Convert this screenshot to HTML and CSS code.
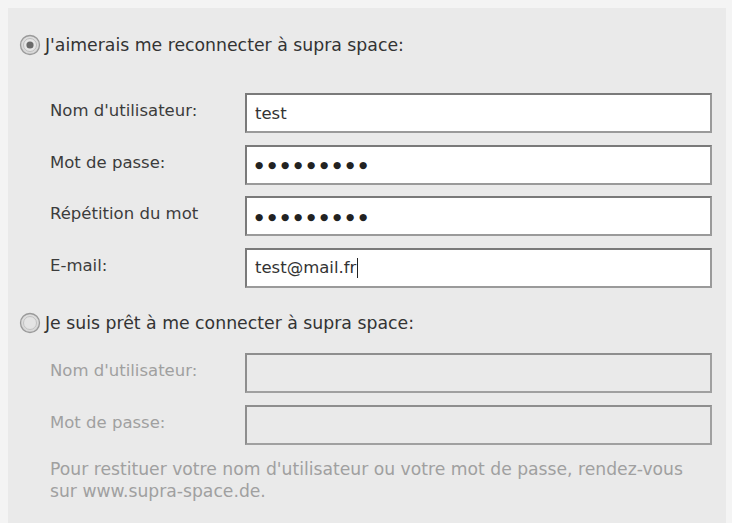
FILE: index.html
```html
<!DOCTYPE html>
<html lang="fr">
<head>
<meta charset="utf-8">
<link rel="stylesheet" href="styles.css">
</head>
<body>
<div class="panel">
  <div class="radio-row">
    <svg class="radio" width="22" height="22" viewBox="0 0 22 22">
      <defs>
        <radialGradient id="rg1" cx="50%" cy="45%" r="55%">
          <stop offset="0" stop-color="#f4f4f4"/>
          <stop offset="1" stop-color="#d2d2d2"/>
        </radialGradient>
      </defs>
      <circle cx="11" cy="11" r="9.5" fill="url(#rg1)" stroke="#9a9a9a" stroke-width="1.3"/>
      <circle cx="11" cy="11" r="6.5" fill="#e6e6e6" stroke="#bdbdbd" stroke-width="1"/>
      <circle cx="11" cy="11" r="3.6" fill="#6a6a6a"/>
    </svg>
    <span class="radio-label">J'aimerais me reconnecter à supra space:</span>
  </div>
  <div class="form form-active">
    <label class="lbl">Nom d'utilisateur:</label>
    <div class="field">test</div>
    <label class="lbl">Mot de passe:</label>
    <div class="field dots">●●●●●●●●●</div>
    <label class="lbl">Répétition du mot</label>
    <div class="field dots">●●●●●●●●●</div>
    <label class="lbl">E-mail:</label>
    <div class="field">test@mail.fr<span class="caret"></span></div>
  </div>
  <div class="radio-row radio-row-2">
    <svg class="radio" width="22" height="22" viewBox="0 0 22 22">
      <defs>
        <radialGradient id="rg2" cx="50%" cy="45%" r="55%">
          <stop offset="0" stop-color="#f4f4f4"/>
          <stop offset="1" stop-color="#d2d2d2"/>
        </radialGradient>
      </defs>
      <circle cx="11" cy="11" r="9.5" fill="url(#rg2)" stroke="#9a9a9a" stroke-width="1.3"/>
      <circle cx="11" cy="11" r="6.5" fill="#e4e4e4" stroke="#c2c2c2" stroke-width="1"/>
    </svg>
    <span class="radio-label">Je suis prêt à me connecter à supra space:</span>
  </div>
  <div class="form form-disabled">
    <label class="lbl">Nom d'utilisateur:</label>
    <div class="field"></div>
    <label class="lbl">Mot de passe:</label>
    <div class="field"></div>
  </div>
  <p class="help">Pour restituer votre nom d'utilisateur ou votre mot de passe, rendez-vous<br>sur www.supra-space.de.</p>
</div>
</body>
</html>
```
FILE: styles.css
```css
html, body {
  margin: 0;
  padding: 0;
  background: #f4f4f4;
  height: 100%;
}
body {
  font-family: "DejaVu Sans", "Liberation Sans", sans-serif;
  font-size: 16px;
  color: #3a3a3a;
  overflow: hidden;
}
.panel {
  margin: 8px 6px 0 8px;
  background: #eaeaea;
  height: 515px;
  padding: 26px 0 0 11px;
  box-sizing: border-box;
}
.radio-row {
  display: flex;
  align-items: center;
  gap: 4px;
  height: 22px;
}
.radio {
  flex: none;
}
.radio-label {
  font-size: 17.3px;
  color: #333;
}
.form {
  display: grid;
  grid-template-columns: 195px 467px;
  padding-left: 31px;
  row-gap: 11.6px;
  align-items: center;
}
.form-active {
  margin-top: 37px;
}
.lbl {
  font-size: 16.5px;
  color: #3c3c3c;
  margin-top: -5px;
}
.field {
  height: 40px;
  box-sizing: border-box;
  background: #fff;
  border: 2px solid #8a8a8a;
  border-top-color: #7a7a7a;
  border-left-color: #7a7a7a;
  border-right-color: #9a9a9a;
  border-bottom-color: #9a9a9a;
  display: flex;
  align-items: center;
  padding-left: 8px;
  font-size: 16.5px;
  color: #333;
}
.dots {
  font-size: 9.5px;
  letter-spacing: 4.7px;
  color: #222;
}
.caret {
  display: inline-block;
  width: 1px;
  height: 20px;
  background: #222;
  margin-left: 1px;
}
.radio-row-2 {
  margin-top: 24px;
}
.form-disabled {
  margin-top: 19px;
  row-gap: 12px;
}
.form-disabled .lbl {
  color: #a0a0a0;
}
.form-disabled .field {
  background: #eaeaea;
  border-color: #8e8e8e #a0a0a0 #a0a0a0 #8e8e8e;
}
.help {
  margin: 13px 0 0 31px;
  font-size: 17.2px;
  line-height: 22px;
  color: #a0a0a0;
}
```
